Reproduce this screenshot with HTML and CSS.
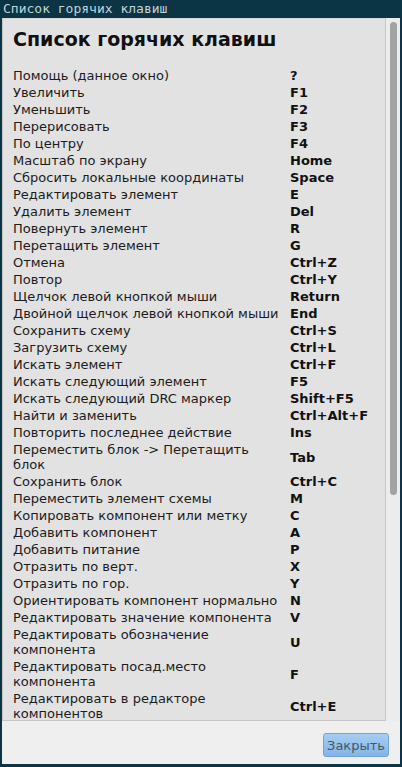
FILE: index.html
```html
<!DOCTYPE html>
<html lang="ru">
<head>
<meta charset="utf-8">
<title>Список горячих клавиш</title>
<link rel="stylesheet" href="styles.css">
</head>
<body>
<div class="window">
  <div class="titlebar">Список горячих клавиш</div>
  <div class="client">
    <div class="view">
      <div class="panel">
        <div class="content">
          <h1 class="heading">Список горячих клавиш</h1>
          <div class="list">
            <div class="row"><span class="label">Помощь (данное окно)</span><span class="key">?</span></div>
            <div class="row"><span class="label">Увеличить</span><span class="key">F1</span></div>
            <div class="row"><span class="label">Уменьшить</span><span class="key">F2</span></div>
            <div class="row"><span class="label">Перерисовать</span><span class="key">F3</span></div>
            <div class="row"><span class="label">По центру</span><span class="key">F4</span></div>
            <div class="row"><span class="label">Масштаб по экрану</span><span class="key">Home</span></div>
            <div class="row"><span class="label">Сбросить локальные координаты</span><span class="key">Space</span></div>
            <div class="row"><span class="label">Редактировать элемент</span><span class="key">E</span></div>
            <div class="row"><span class="label">Удалить элемент</span><span class="key">Del</span></div>
            <div class="row"><span class="label">Повернуть элемент</span><span class="key">R</span></div>
            <div class="row"><span class="label">Перетащить элемент</span><span class="key">G</span></div>
            <div class="row"><span class="label">Отмена</span><span class="key">Ctrl+Z</span></div>
            <div class="row"><span class="label">Повтор</span><span class="key">Ctrl+Y</span></div>
            <div class="row"><span class="label">Щелчок левой кнопкой мыши</span><span class="key">Return</span></div>
            <div class="row"><span class="label">Двойной щелчок левой кнопкой мыши</span><span class="key">End</span></div>
            <div class="row"><span class="label">Сохранить схему</span><span class="key">Ctrl+S</span></div>
            <div class="row"><span class="label">Загрузить схему</span><span class="key">Ctrl+L</span></div>
            <div class="row"><span class="label">Искать элемент</span><span class="key">Ctrl+F</span></div>
            <div class="row"><span class="label">Искать следующий элемент</span><span class="key">F5</span></div>
            <div class="row"><span class="label">Искать следующий DRC маркер</span><span class="key">Shift+F5</span></div>
            <div class="row"><span class="label">Найти и заменить</span><span class="key">Ctrl+Alt+F</span></div>
            <div class="row"><span class="label">Повторить последнее действие</span><span class="key">Ins</span></div>
            <div class="row"><span class="label">Переместить блок -&gt; Перетащить блок</span><span class="key">Tab</span></div>
            <div class="row"><span class="label">Сохранить блок</span><span class="key">Ctrl+C</span></div>
            <div class="row"><span class="label">Переместить элемент схемы</span><span class="key">M</span></div>
            <div class="row"><span class="label">Копировать компонент или метку</span><span class="key">C</span></div>
            <div class="row"><span class="label">Добавить компонент</span><span class="key">A</span></div>
            <div class="row"><span class="label">Добавить питание</span><span class="key">P</span></div>
            <div class="row"><span class="label">Отразить по верт.</span><span class="key">X</span></div>
            <div class="row"><span class="label">Отразить по гор.</span><span class="key">Y</span></div>
            <div class="row"><span class="label">Ориентировать компонент нормально</span><span class="key">N</span></div>
            <div class="row"><span class="label">Редактировать значение компонента</span><span class="key">V</span></div>
            <div class="row"><span class="label">Редактировать обозначение компонента</span><span class="key">U</span></div>
            <div class="row"><span class="label">Редактировать посад.место компонента</span><span class="key">F</span></div>
            <div class="row"><span class="label">Редактировать в редакторе компонентов</span><span class="key">Ctrl+E</span></div>
          </div>
        </div>
      </div>
      <div class="scrollbar"><div class="thumb"></div></div>
    </div>
    <div class="footer">
      <button class="btn" type="button">Закрыть</button>
    </div>
  </div>
</div>
</body>
</html>
```

FILE: styles.css
```css
* { box-sizing: border-box; }
html, body {
  margin: 0;
  padding: 0;
  width: 402px;
  height: 767px;
  overflow: hidden;
  background: #0b3545;
}
.window {
  display: flex;
  flex-direction: column;
  height: 767px;
  padding: 0 2px 3px 2px;
}
.titlebar {
  height: 18px;
  flex: none;
  font-family: "DejaVu Sans Mono", monospace;
  font-size: 13px;
  line-height: 18px;
  color: #c4d2d8;
  margin-left: 1px;
  white-space: nowrap;
}
.client {
  flex: 1;
  display: flex;
  flex-direction: column;
  background: #efefef;
  min-height: 0;
}
.view {
  display: flex;
  height: 703px;
  flex: none;
}
.panel {
  width: 384px;
  flex: none;
  background: #e2e2e2;
  border-left: 1px solid #c6c6c6;
  border-right: 1px solid #c6c6c6;
  border-bottom: 1px solid #c6c6c6;
  border-top: 1px solid #d6d6d6;
  overflow: hidden;
}
.content {
  padding: 8px 10px 0 10px;
  font-family: "DejaVu Sans", sans-serif;
  color: #1c1c1c;
}
.heading {
  margin: 0 0 16px 0;
  font-size: 19px;
  line-height: 24px;
  font-weight: bold;
  color: #111;
  letter-spacing: 0;
}
.list {
  display: flex;
  flex-direction: column;
}
.row {
  display: grid;
  grid-template-columns: 270px auto;
  column-gap: 7px;
  align-items: center;
  padding: 1px 0;
  font-size: 13px;
  line-height: 15px;
}
.key {
  font-weight: bold;
  color: #111;
}
.scrollbar {
  flex: 1;
  padding: 4px 2px 0 4px;
  background: #ececec;
}
.thumb {
  width: 7px;
  height: 473px;
  background: #a3a3a3;
  border-radius: 4px;
}
.footer {
  flex: 1;
  display: flex;
  justify-content: flex-end;
  align-items: flex-start;
  padding: 12px 11px 0 0;
}
.btn {
  width: 66px;
  height: 24px;
  padding: 0;
  font-family: "DejaVu Sans", sans-serif;
  font-size: 13px;
  color: #4c5660;
  background: linear-gradient(#a6cdf3, #84b5e8);
  border: 1px solid #74a4d4;
  border-radius: 3px;
}
```
